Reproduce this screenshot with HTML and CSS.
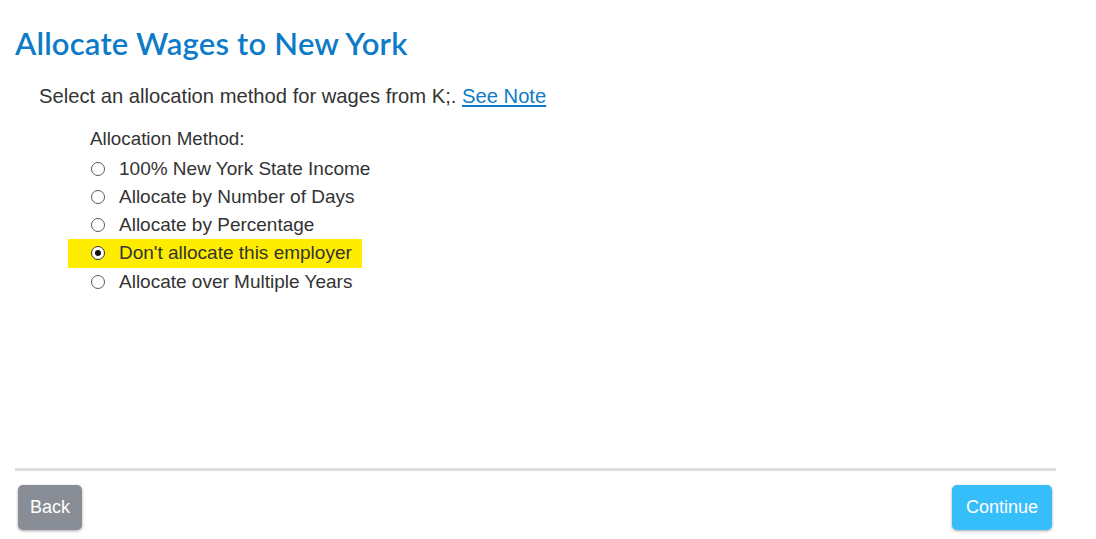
FILE: index.html
```html
<!DOCTYPE html>
<html>
<head>
<meta charset="utf-8">
<link rel="stylesheet" href="styles.css">
</head>
<body>
<div class="page">
  <h1 class="title">Allocate Wages to New York</h1>
  <p class="intro">Select an allocation method for wages from K;. <a href="#" class="link">See Note</a></p>
  <div class="group">
    <div class="group-label">Allocation Method:</div>
    <label class="option"><span class="radio"></span><span>100% New York State Income</span></label>
    <label class="option"><span class="radio"></span><span>Allocate by Number of Days</span></label>
    <label class="option"><span class="radio"></span><span>Allocate by Percentage</span></label>
    <label class="option selected"><span class="radio checked"></span><span>Don't allocate this employer</span></label>
    <label class="option"><span class="radio"></span><span>Allocate over Multiple Years</span></label>
  </div>
  <div class="footer">
    <button class="btn btn-back">Back</button>
    <button class="btn btn-continue">Continue</button>
  </div>
</div>
</body>
</html>
```
FILE: styles.css
```css
html, body {
  margin: 0;
  padding: 0;
  background: #fff;
}
body {
  font-family: "Liberation Sans", Arial, sans-serif;
  color: #333;
}
.page {
  width: 1041px;
  padding: 0 0 0 15px;
  height: 539px;
  display: flex;
  flex-direction: column;
}
.title {
  font-family: Lato, "Open Sans", sans-serif;
  font-weight: 600;
  font-size: 31px;
  color: #0d7bc7;
  margin: 26px 0 0 0;
  line-height: 34px;
  letter-spacing: 0.2px;
}
.intro {
  font-size: 20.2px;
  margin: 24px 0 0 24px;
  line-height: 24px;
}
.link {
  color: #0d7bc7;
  text-decoration: underline;
}
.group {
  margin: 17px 0 0 53px;
  display: flex;
  flex-direction: column;
  align-items: flex-start;
}
.group-label {
  font-size: 18.8px;
  line-height: 28px;
  margin-left: 22px;
  height: 29.5px;
}
.option {
  display: flex;
  align-items: center;
  font-size: 19px;
  height: 28.25px;
  padding: 0 10px 0 23px;
  gap: 14px;
}
.option.selected {
  background: #ffed00;
}
.radio {
  width: 14px;
  height: 14px;
  border: 1.3px solid #5a5a5a;
  border-radius: 50%;
  background: #fff;
  box-sizing: border-box;
  position: relative;
  flex: none;
}
.radio.checked {
  border-color: #333;
}
.radio.checked::after {
  content: "";
  position: absolute;
  left: 2.7px;
  top: 2.7px;
  width: 6px;
  height: 6px;
  border-radius: 50%;
  background: #111;
}
.footer {
  margin-top: auto;
  margin-bottom: 9px;
  border-top: 3px solid #ddd;
  padding-top: 14px;
  display: flex;
  justify-content: space-between;
  padding-left: 3px;
  padding-right: 4px;
}
.btn {
  font-family: "Liberation Sans", Arial, sans-serif;
  font-size: 18px;
  color: #fff;
  border: none;
  border-radius: 5px;
  height: 45px;
  box-shadow: 0 1px 3px rgba(0,0,0,0.35);
}
.btn-back {
  background: #898e96;
  width: 64px;
}
.btn-continue {
  background: #36befb;
  width: 100px;
}
```
